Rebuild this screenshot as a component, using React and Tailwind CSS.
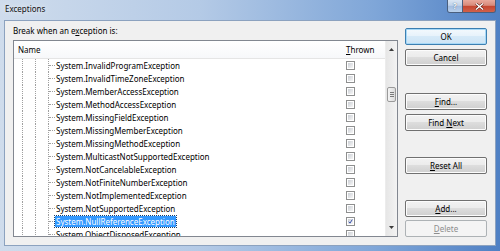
import React from "react";

const ROWS = [
  "System.InvalidProgramException",
  "System.InvalidTimeZoneException",
  "System.MemberAccessException",
  "System.MethodAccessException",
  "System.MissingFieldException",
  "System.MissingMemberException",
  "System.MissingMethodException",
  "System.MulticastNotSupportedException",
  "System.NotCancelableException",
  "System.NotFiniteNumberException",
  "System.NotImplementedException",
  "System.NotSupportedException",
  "System.NullReferenceException",
  "System.ObjectDisposedException",
];

const SELECTED = "System.NullReferenceException";

function Checkbox({ checked }) {
  return (
    <div className="w-[9px] h-[9px] border border-[#8e8f8f] bg-white p-px">
      <div className="w-full h-full bg-[linear-gradient(135deg,#cbcfd5,#f6f6f6)] flex items-center justify-center">
        {checked && (
          <svg width="7" height="7" viewBox="0 0 7 7">
            <path d="M1 3.8 L2.8 5.8 L6 0.8" fill="none" stroke="#2b46a8" strokeWidth="1.3" />
          </svg>
        )}
      </div>
    </div>
  );
}

function Button({ children, kind, className = "" }) {
  const look =
    kind === "default"
      ? "border-[#3c7fb1] text-black bg-[linear-gradient(#f3f9fd_0%,#e6f2fb_50%,#d6eaf8_50%,#cde4f5_100%)] shadow-[inset_0_0_0_1px_#a6d8f7]"
      : kind === "disabled"
      ? "border-[#adb2b5] text-[#8d8d8d] bg-[#f4f4f4]"
      : "border-[#707070] text-black bg-[linear-gradient(#f2f2f2_0%,#ebebeb_50%,#dddddd_50%,#cfcfcf_100%)] shadow-[inset_0_0_0_1px_#fcfcfc]";
  return (
    <div className={`h-[17px] w-[82px] rounded-[2px] border flex items-center justify-center text-[8px] leading-none ${look} ${className}`}>
      {children}
    </div>
  );
}

function TreeRow({ label }) {
  const selected = label === SELECTED;
  return (
    <div className="flex h-[13px] shrink-0">
      <div className="relative w-[330px] h-full">
        <span className="absolute left-[8px] top-0 h-full border-l border-dotted border-[#a0a0a0]" />
        <span className="absolute left-[21px] top-0 h-full border-l border-dotted border-[#a0a0a0]" />
        <span className="absolute left-[34px] top-0 h-full border-l border-dotted border-[#a0a0a0]" />
        <span className="absolute left-[35px] top-[6px] w-[6px] border-t border-dotted border-[#a0a0a0]" />
        <span
          className={`absolute left-[41px] top-[1px] h-[11px] px-px flex items-center whitespace-nowrap ${
            selected ? "bg-[#3399ff] text-white outline outline-1 outline-dotted outline-[#1a3d66]" : "text-black"
          }`}
        >
          {label}
        </span>
      </div>
      <div className="w-[41px] pl-[2px] flex items-center">
        <Checkbox checked={selected} />
      </div>
    </div>
  );
}

function Scrollbar() {
  return (
    <div className="w-[12px] h-full flex flex-col bg-[linear-gradient(90deg,#e6e6e6,#f3f3f3)] border-l border-[#ececec]">
      <div className="h-[17px] flex items-center justify-center">
        <svg width="5" height="3" viewBox="0 0 5 3">
          <path d="M0 3 L2.5 0 L5 3 Z" fill="#3c3c3c" />
        </svg>
      </div>
      <div className="h-[29px]" />
      <div className="mx-px h-[15px] rounded-[2px] border border-[#9a9a9a] bg-[linear-gradient(90deg,#f4f4f4,#dcdcdc)] flex flex-col items-center justify-center gap-px">
        <div className="w-[4px] h-px bg-[#7a7a7a]" />
        <div className="w-[4px] h-px bg-[#7a7a7a]" />
        <div className="w-[4px] h-px bg-[#7a7a7a]" />
      </div>
      <div className="flex-1" />
      <div className="h-[17px] flex items-center justify-center">
        <svg width="5" height="3" viewBox="0 0 5 3">
          <path d="M0 0 L5 0 L2.5 3 Z" fill="#3c3c3c" />
        </svg>
      </div>
    </div>
  );
}

export default function App() {
  return (
    <div
      className="w-[500px] h-[251px] flex flex-col overflow-hidden bg-[linear-gradient(90deg,#cfdcec_0%,#b4cae6_40%,#7fa6d8_75%,#4f80c4_100%)]"
      style={{ fontFamily: '"Noto Sans", "Open Sans", sans-serif' }}
    >
      <div className="h-[20px] flex items-start shrink-0">
        <div className="pl-[5px] pt-[3px] text-[8px] leading-[12px] text-[#111] [text-shadow:0_0_6px_#ffffff]">
          Exceptions
        </div>
        <div className="ml-auto mr-[4px] flex h-[13px] rounded-b-[3px] border border-t-0 border-[#4a5f7e] overflow-hidden">
          <div className="w-[15px] h-full flex items-center justify-center bg-[linear-gradient(#dbe6f3_0%,#c1d3ea_45%,#a3bde0_50%,#b9d0ec_100%)] border-r border-[#4a5f7e] text-[8px] font-bold text-white leading-none [text-shadow:0_0_1px_#203a5e]">
            ?
          </div>
          <div className="w-[32px] h-full flex items-center justify-center bg-[linear-gradient(#e9a99c_0%,#d88a7a_45%,#c5452f_50%,#d1614a_100%)]">
            <svg width="9" height="7" viewBox="0 0 9 7">
              <path d="M1 0.5 L8 6.5 M8 0.5 L1 6.5" stroke="#5a1a12" strokeWidth="2.4" />
              <path d="M1 0.5 L8 6.5 M8 0.5 L1 6.5" stroke="#ffffff" strokeWidth="1.4" />
            </svg>
          </div>
        </div>
      </div>

      <div className="mx-[4px] h-[226px] shrink-0 bg-[#f0f0f0] border border-[#8ca2bf] flex">
        <div className="pl-[8px] pt-[4px] flex flex-col">
          <div className="h-[12px] text-[8px] leading-[12px] text-black">
            Break when an e<span className="underline">x</span>ception is:
          </div>
          <div className="mt-[3px] w-[385px] h-[197px] border border-[#828790] bg-white flex overflow-hidden">
            <div className="w-[371px] h-full flex flex-col overflow-hidden text-[8px] leading-none">
              <div className="h-[18px] shrink-0 flex border-b border-[#e5e5e5] bg-[linear-gradient(#ffffff,#f7f8fa)]">
                <div className="w-[330px] pl-[4px] flex items-center">Name</div>
                <div className="w-[41px] pl-[2px] flex items-center">
                  <span className="underline">T</span>hrown
                </div>
              </div>
              {ROWS.map((r) => (
                <TreeRow key={r} label={r} />
              ))}
            </div>
            <Scrollbar />
          </div>
        </div>

        <div className="ml-[7px] pt-[7px] flex flex-col">
          <Button kind="default">OK</Button>
          <Button className="mt-[4px]">Cancel</Button>
          <Button className="mt-[27px]">
            <span className="underline">F</span>ind...
          </Button>
          <Button className="mt-[4px]">
            Find&nbsp;<span className="underline">N</span>ext
          </Button>
          <Button className="mt-[26px]">
            <span className="underline">R</span>eset All
          </Button>
          <Button className="mt-[26px]">
            <span className="underline">A</span>dd...
          </Button>
          <Button kind="disabled" className="mt-[3px]">
            <span className="underline">D</span>elete
          </Button>
        </div>
      </div>
    </div>
  );
}
